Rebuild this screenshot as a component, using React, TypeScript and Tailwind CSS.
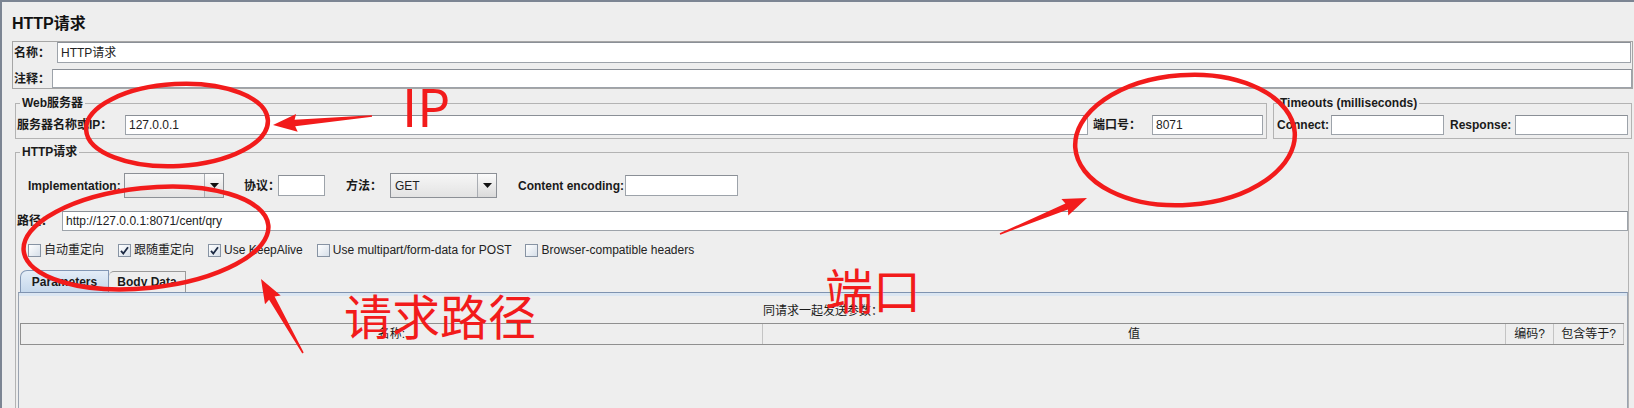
import React from "react";

const ui = "font-[family-name:'Liberation_Sans','Noto_Sans_CJK_SC',sans-serif]";
const mark = "font-[family-name:'Noto_Sans_CJK_SC','Liberation_Sans',sans-serif]";
const lbl = "shrink-0 whitespace-nowrap text-[12px] font-bold text-[#1a1a1a]";

function Field({ value, className = "" }: { value?: string; className?: string }) {
  return (
    <div
      className={`flex h-full shrink-0 items-center whitespace-nowrap border border-[#9da3aa] border-t-[#8a8f96] bg-white pl-[3px] text-[12px] text-[#222] ${className}`}
    >
      {value}
    </div>
  );
}

function Combo({ value, className = "" }: { value?: string; className?: string }) {
  return (
    <div className={`flex h-full shrink-0 border border-[#8c9096] bg-gradient-to-b from-[#f6f6f6] to-[#e3e3e3] ${className}`}>
      <div className="flex flex-1 items-center pl-[4px] text-[12px] text-[#222]">{value}</div>
      <div className="flex w-[19px] items-center justify-center border-l border-[#a9adb3] bg-gradient-to-b from-[#fbfbfb] to-[#dadada]">
        <svg width="9" height="5" viewBox="0 0 9 5">
          <path d="M0 0 H9 L4.5 5 Z" fill="#111" />
        </svg>
      </div>
    </div>
  );
}

function Check({ label, checked }: { label: string; checked?: boolean }) {
  return (
    <div className="flex shrink-0 items-center gap-[3px]">
      <div className="flex h-[13px] w-[13px] items-center justify-center border border-[#8793a3] bg-gradient-to-br from-[#ffffff] to-[#d6dfe9]">
        {checked && (
          <svg width="9" height="9" viewBox="0 0 9 9">
            <path d="M1 4.8 L3.3 7.5 L8 1.2" fill="none" stroke="#1d2a44" strokeWidth="1.8" />
          </svg>
        )}
      </div>
      <span className="whitespace-nowrap text-[12px] text-[#222]">{label}</span>
    </div>
  );
}

// tapered annotation arrow, tail -> tip
function arrow(tx: number, ty: number, px: number, py: number) {
  const len = Math.hypot(px - tx, py - ty);
  const dx = (px - tx) / len;
  const dy = (py - ty) / len;
  const nx = -dy;
  const ny = dx;
  const H = 22;
  const bx = px - dx * H;
  const by = py - dy * H;
  const pts: [number, number][] = [
    [tx + nx * 0.8, ty + ny * 0.8],
    [bx + nx * 3.2, by + ny * 3.2],
    [bx - dx * 2 + nx * 9, by - dy * 2 + ny * 9],
    [px, py],
    [bx - dx * 2 - nx * 9, by - dy * 2 - ny * 9],
    [bx - nx * 3.2, by - ny * 3.2],
    [tx - nx * 0.8, ty - ny * 0.8],
  ];
  return pts.map((p) => p.map((v) => v.toFixed(1)).join(",")).join(" ");
}

export default function App() {
  return (
    <div className={`relative h-[408px] w-[1634px] overflow-hidden border-l-2 border-t-2 border-[#7c8593] bg-[#eeeeee] ${ui}`}>
      <div className="h-[39px] pl-[10px] pt-[12px] text-[16px] font-bold leading-[20px] text-[#111]">HTTP请求</div>

      <div className="ml-[10px] mr-[1px] flex h-[48px] flex-col border border-[#a6a6a6]">
        <div className="flex h-[21px] items-center">
          <span className={`${lbl} w-[44px] pl-[1px]`}>名称：</span>
          <Field value="HTTP请求" className="mr-[1px] flex-1 shrink" />
        </div>
        <div className="mt-[6px] flex h-[19px] items-center">
          <span className={`${lbl} w-[39px] pl-[1px]`}>注释：</span>
          <Field className="flex-1 shrink" />
        </div>
      </div>

      <div className="ml-[13px] mt-[7px] flex gap-[6px]">
        <fieldset className="w-[1252px] border border-[#b3b3b3]">
          <legend className="ml-[4px] px-[2px] text-[12px] font-bold leading-[14px] text-[#1a1a1a]">Web服务器</legend>
          <div className="mb-[3px] mt-[5px] flex h-[20px] items-center pr-[3px]">
            <span className={`${lbl} w-[109px] pl-[1px]`}>服务器名称或IP：</span>
            <Field value="127.0.0.1" className="flex-1 shrink" />
            <span className={`${lbl} ml-[5px] w-[59px]`}>端口号：</span>
            <Field value="8071" className="w-[111px]" />
          </div>
        </fieldset>
        <fieldset className="w-[359px] border border-[#b3b3b3]">
          <legend className="ml-[4px] px-[2px] text-[12px] font-bold leading-[14px] text-[#1a1a1a]">Timeouts (milliseconds)</legend>
          <div className="mb-[3px] mt-[5px] flex h-[20px] items-center pl-[3px] pr-[3px]">
            <span className={`${lbl} w-[54px]`}>Connect:</span>
            <Field className="w-[113px]" />
            <span className={`${lbl} ml-[6px] w-[65px]`}>Response:</span>
            <Field className="flex-1 shrink" />
          </div>
        </fieldset>
      </div>

      <fieldset className="ml-[13px] mt-[6px] h-[300px] w-[1614px] border border-[#b3b3b3]">
        <legend className="ml-[4px] px-[2px] text-[12px] font-bold leading-[14px] text-[#1a1a1a]">HTTP请求</legend>

        <div className="mt-[14px] flex h-[25px] items-center pl-[12px]">
          <span className={`${lbl} w-[96px]`}>Implementation:</span>
          <Combo className="w-[100px]" />
          <span className={`${lbl} ml-[20px] w-[34px]`}>协议：</span>
          <Field className="h-[21px]! w-[47px]" />
          <span className={`${lbl} ml-[21px] w-[44px]`}>方法：</span>
          <Combo value="GET" className="w-[107px]" />
          <span className={`${lbl} ml-[21px] w-[107px]`}>Content encoding:</span>
          <Field className="h-[21px]! w-[113px]" />
        </div>

        <div className="mt-[13px] flex h-[20px] items-center">
          <span className={`${lbl} w-[46px] pl-[1px]`}>路径：</span>
          <Field value="http://127.0.0.1:8071/cent/qry" className="flex-1 shrink" />
        </div>

        <div className="mt-[11px] flex h-[16px] items-center gap-[14px] pl-[12px]">
          <Check label="自动重定向" />
          <Check label="跟随重定向" checked />
          <Check label="Use KeepAlive" checked />
          <Check label="Use multipart/form-data for POST" />
          <Check label="Browser-compatible headers" />
        </div>

        <div className="ml-[4px] mt-[12px] flex h-[22px] items-end">
          <div className="flex h-[22px] w-[89px] items-center justify-center rounded-tl-[7px] border border-b-0 border-[#8297b5] bg-gradient-to-b from-[#e4edf7] to-[#c5d8ec] text-[12px] font-bold text-[#1a1a1a]">
            Parameters
          </div>
          <div className="flex h-[21px] w-[77px] items-center justify-center rounded-tl-[5px] border border-b-0 border-l-0 border-[#9a9a9a] bg-[#eeeeee] text-[12px] font-bold text-[#1a1a1a]">
            Body Data
          </div>
        </div>

        <div className="ml-[2px] flex h-[200px] flex-col border border-[#9aa3b0] border-t-[#7f93b0]">
          <div className="h-[3px] bg-[#dbe6f2]" />
          <div className="pt-[7px] text-center text-[12px] leading-[16px] text-[#1a1a1a]">同请求一起发送参数：</div>
          <div className="ml-[1px] mr-[3px] mt-[4px] flex h-[22px] border-y border-l border-[#8f8f8f] text-[12px] text-[#1a1a1a]">
            <div className="flex w-[742px] items-center justify-center border-r border-[#c4c4c4]">名称:</div>
            <div className="flex w-[743px] items-center justify-center border-r border-[#c4c4c4]">值</div>
            <div className="flex w-[48px] items-center justify-center border-r border-[#c4c4c4]">编码?</div>
            <div className="flex flex-1 items-center justify-center border-r border-[#c4c4c4]">包含等于?</div>
          </div>
        </div>
      </fieldset>

      <svg className="pointer-events-none absolute left-[-2px] top-[-2px]" width="1634" height="408" viewBox="0 0 1634 408">
        <g fill="none" stroke="#f21b1b" strokeWidth="4.5">
          <ellipse cx="177" cy="125" rx="91" ry="41" transform="rotate(-3 177 125)" />
          <ellipse cx="1185" cy="140" rx="110" ry="65" transform="rotate(-4 1185 140)" />
          <ellipse cx="146" cy="238" rx="123" ry="50" transform="rotate(-6 146 238)" />
        </g>
        <g fill="#f21b1b">
          <polygon points={arrow(372, 116, 273, 125)} />
          <polygon points={arrow(1000, 234, 1087, 198)} />
          <polygon points={arrow(303, 353, 261, 279)} />
        </g>
      </svg>

      <div className={`pointer-events-none absolute left-[400px] top-[77px] text-[52px] leading-none text-[#f21b1b] ${mark}`}>IP</div>
      <div className={`pointer-events-none absolute left-[823px] top-[262px] text-[48px] leading-none text-[#f21b1b] ${mark}`}>端口</div>
      <div className={`pointer-events-none absolute left-[342px] top-[288px] text-[48px] leading-none text-[#f21b1b] ${mark}`}>请求路径</div>
    </div>
  );
}
